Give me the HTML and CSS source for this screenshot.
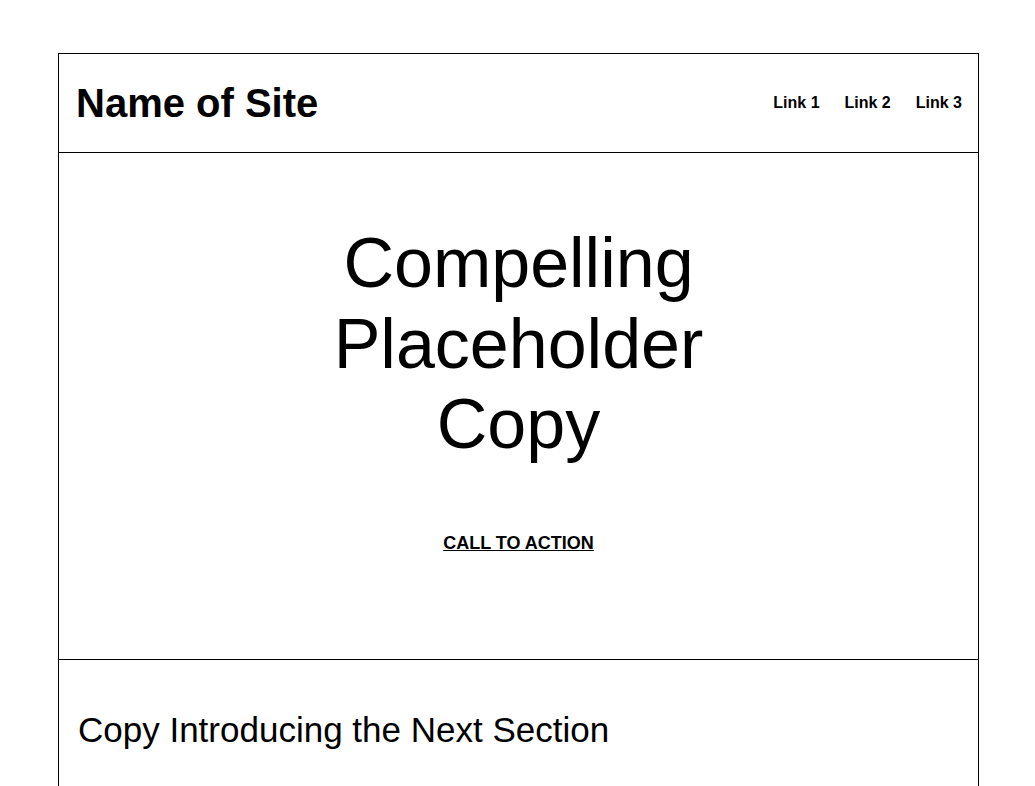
FILE: index.html
```html
<!DOCTYPE html>
<html lang="en">
<head>
<meta charset="utf-8">
<title>Name of Site</title>
<link rel="stylesheet" href="styles.css">
</head>
<body>
<div class="page">
  <header class="site-header">
    <div class="site-name">Name of Site</div>
    <nav class="site-nav">
      <a href="#" class="nav-link">Link 1</a>
      <a href="#" class="nav-link">Link 2</a>
      <a href="#" class="nav-link">Link 3</a>
    </nav>
  </header>
  <section class="hero">
    <h1 class="hero-title">Compelling<br>Placeholder<br>Copy</h1>
    <a href="#" class="cta">CALL TO ACTION</a>
  </section>
  <section class="next">
    <h2 class="next-title">Copy Introducing the Next Section</h2>
  </section>
</div>
</body>
</html>
```
FILE: styles.css
```css
html, body {
  margin: 0;
  padding: 0;
  background: #fff;
}
body {
  font-family: "Liberation Sans", Arial, sans-serif;
  color: #000;
  padding: 53px 56px 0 58px;
}
.page {
  width: 921px;
  box-sizing: border-box;
  border: 1px solid #000;
  border-bottom: none;
}
.site-header {
  height: 98px;
  display: flex;
  align-items: center;
  justify-content: space-between;
  padding: 0 16px 0 17px;
  border-bottom: 1px solid #000;
}
.site-name {
  font-size: 40px;
  font-weight: bold;
}
.site-nav {
  display: flex;
  gap: 25px;
}
.nav-link {
  font-size: 16px;
  font-weight: bold;
  color: #000;
  text-decoration: none;
}
.hero {
  height: 507px;
  box-sizing: border-box;
  padding-top: 70px;
  display: flex;
  flex-direction: column;
  align-items: center;
  border-bottom: 1px solid #000;
}
.hero-title {
  margin: 0;
  font-size: 70px;
  font-weight: normal;
  line-height: 80.5px;
  text-align: center;
}
.cta {
  margin-top: 68px;
  font-size: 18px;
  font-weight: bold;
  color: #000;
  text-decoration: underline;
}
.next {
  padding: 50px 19px 200px;
}
.next-title {
  margin: 0;
  font-size: 35px;
  font-weight: normal;
}
```
